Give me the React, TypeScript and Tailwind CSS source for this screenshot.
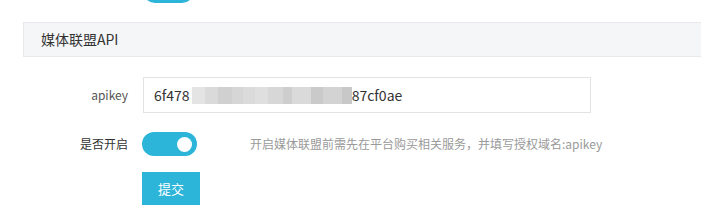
import React from "react";

const blocks: [number, string][] = [
  [13, "#e4e4e4"],
  [13, "#dadada"],
  [14, "#d0d0d0"],
  [11, "#d6d6d6"],
  [12, "#dbdbdb"],
  [13, "#dfdfdf"],
  [15, "#d7d7d7"],
  [9, "#cecece"],
  [19, "#dadada"],
  [12, "#cacaca"],
  [19, "#d3d3d3"],
  [10, "#c8c8c8"],
];

function Toggle() {
  return (
    <div className="flex h-[24px] w-[55px] items-center justify-end rounded-full bg-[#2cb5d9] pr-[5px]">
      <div className="h-[15px] w-[15px] rounded-full bg-white" />
    </div>
  );
}

export default function App() {
  return (
    <div
      className="h-[221px] w-[701px] overflow-hidden bg-white"
      style={{ fontFamily: '"Microsoft YaHei", "Noto Sans CJK SC", "Noto Sans", sans-serif' }}
    >
      <div className="ml-[143px] h-[3px] overflow-hidden">
        <div className="mt-[-21px]">
          <div className="h-[24px] w-[51px] rounded-full bg-[#2cb5d9]" />
        </div>
      </div>
      <div className="ml-[23px] mt-[19px] flex h-[35px] w-[900px] items-center border border-[#e6e8eb] bg-[#f5f6f8] pl-[17px] text-[14px] text-[#333]">
        媒体联盟API
      </div>
      <div className="ml-[23px] mt-[20px] flex items-center">
        <div className="w-[105px] text-right text-[12px] text-[#555]">apikey</div>
        <div className="ml-[15px] flex h-[36px] w-[448px] items-center border border-[#e3e3e3] pl-[10px] text-[14px] text-[#333]">
          <span>6f478</span>
          <span className="ml-[2px] flex h-[17px]">
            {blocks.map(([w, c], i) => (
              <span key={i} className="h-full" style={{ width: w, background: c }} />
            ))}
          </span>
          <span>87cf0ae</span>
        </div>
      </div>
      <div className="ml-[23px] mt-[19px] flex items-center">
        <div className="w-[105px] text-right text-[12px] text-[#333]">是否开启</div>
        <div className="ml-[14px]">
          <Toggle />
        </div>
        <div className="ml-[53px] text-[12px] text-[#9a9a9a]">
          开启媒体联盟前需先在平台购买相关服务，并填写授权域名:apikey
        </div>
      </div>
      <div className="ml-[142px] mt-[16px] flex h-[33px] w-[58px] items-center justify-center bg-[#2cb5d9] text-[13px] text-white">
        提交
      </div>
    </div>
  );
}
